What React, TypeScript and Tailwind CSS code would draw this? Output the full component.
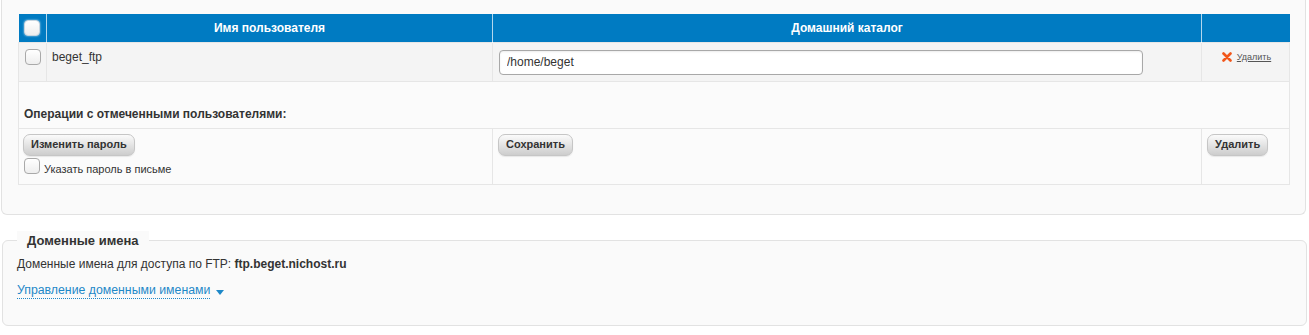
import React from "react";

function Check({ header }: { header?: boolean }) {
  return (
    <span
      className={`inline-block w-4 h-4 rounded-[4px] border bg-gradient-to-b from-white to-[#eeeeee] align-middle ${
        header ? "border-[#c9d6e0] shadow-[0_0_2px_rgba(255,255,255,0.8)]" : "border-[#a9a9a9]"
      }`}
    />
  );
}

function Btn({ children }: { children: React.ReactNode }) {
  return (
    <button
      type="button"
      className="h-[22px] px-[7px] rounded-[7px] border border-[#c6c6c6] bg-gradient-to-b from-[#fbfbfb] to-[#cdcdcd] text-[11px] font-bold text-[#333] leading-none shadow-[0_1px_1px_rgba(0,0,0,0.08)]"
    >
      {children}
    </button>
  );
}

export default function App() {
  return (
    <div className="w-[1309px] h-[335px] bg-white text-[#333] text-[12px] font-['Liberation_Sans',Arial,sans-serif]">
      <div className="ml-[1px] mr-[3px] rounded-b-[6px] border border-t-0 border-[#e2e2e2] bg-[#fafafa] pt-[14px] pb-[29px] pl-[16px] pr-[15px]">
        <table className="w-full table-fixed border-collapse">
          <colgroup>
            <col className="w-[28px]" />
            <col className="w-[446px]" />
            <col className="w-[709px]" />
            <col />
          </colgroup>
          <thead>
            <tr className="h-[28px] bg-[#007bc2] text-white font-bold text-[12px]">
              <th className="text-center align-middle">
                <span className="flex justify-center">
                  <Check header />
                </span>
              </th>
              <th className="border-l border-white/70 font-bold">Имя пользователя</th>
              <th className="border-l border-white/70 font-bold">Домашний каталог</th>
              <th className="border-l border-white/70" />
            </tr>
          </thead>
          <tbody>
            <tr className="h-[39px] bg-[#f4f4f4] align-top">
              <td className="border border-[#e6e6e6] pt-[6px]">
                <span className="flex justify-center">
                  <Check />
                </span>
              </td>
              <td className="border border-[#e6e6e6] pl-[5px] pt-[7px] leading-[15px]">beget_ftp</td>
              <td className="border border-[#e6e6e6] pl-[6px] pt-[7px]">
                <input
                  readOnly
                  value="/home/beget"
                  className="block w-[644px] h-[25px] rounded-[4px] border border-[#a8a8a8] bg-white px-[7px] text-[12px] text-[#333] shadow-[inset_0_1px_2px_rgba(0,0,0,0.08)] outline-none"
                />
              </td>
              <td className="border border-[#e6e6e6] pt-[8px]">
                <div className="flex items-center justify-center gap-[5px] pl-[2px]">
                  <svg width="10" height="10" viewBox="0 0 10 10">
                    <path d="M1.5 1.5 L8.5 8.5 M8.5 1.5 L1.5 8.5" stroke="#f2571b" strokeWidth="2.6" strokeLinecap="round" />
                  </svg>
                  <a className="text-[9px] text-[#555] underline">Удалить</a>
                </div>
              </td>
            </tr>
            <tr>
              <td colSpan={4} className="border border-[#e6e6e6] bg-[#fbfbfb] pl-[5px] pt-[25px] pb-[6px] font-bold leading-[15px]">
                Операции с отмеченными пользователями:
              </td>
            </tr>
            <tr className="h-[56px] align-top bg-[#fbfbfb]">
              <td colSpan={2} className="border border-[#e6e6e6] pl-[4px] pt-[5px]">
                <Btn>Изменить пароль</Btn>
                <div className="flex items-end mt-[1px]">
                  <span className="ml-[1px]">
                    <Check />
                  </span>
                  <span className="ml-[4px] text-[11px] leading-[12px]">Указать пароль в письме</span>
                </div>
              </td>
              <td className="border border-[#e6e6e6] pl-[5px] pt-[5px]">
                <Btn>Сохранить</Btn>
              </td>
              <td className="border border-[#e6e6e6] pl-[5px] pt-[5px]">
                <Btn>Удалить</Btn>
              </td>
            </tr>
          </tbody>
        </table>
      </div>

      <fieldset className="mt-[16px] ml-[2px] mr-[2px] rounded-[6px] border border-[#e2e2e2] bg-[#fafafa] pl-[14px] pb-[26px]">
        <legend className="px-[10px] bg-[#fafafa] text-[13px] font-bold leading-[20px]">Доменные имена</legend>
        <div className="pt-[4px] leading-[18px]">
          Доменные имена для доступа по FTP: <b>ftp.beget.nichost.ru</b>
        </div>
        <div className="mt-[10px] flex items-center leading-[18px]">
          <a className="text-[#1e88c8] text-[12.3px] border-b border-dotted border-[#1e88c8] leading-[15px]">Управление доменными именами</a>
          <span className="ml-[6px] mt-[3px] w-0 h-0 border-l-[4px] border-r-[4px] border-t-[5px] border-l-transparent border-r-transparent border-t-[#1e88c8]" />
        </div>
      </fieldset>
    </div>
  );
}
